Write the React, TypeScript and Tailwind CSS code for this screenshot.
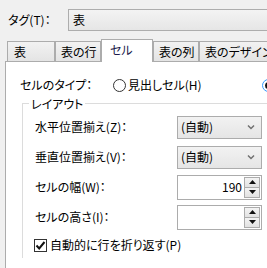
export default function App() {
    return <div className="w-[267px] h-[268px] overflow-hidden bg-[#f0f0f0] text-[12px] leading-none text-black font-['Noto_Sans_CJK_JP',sans-serif] [font-feature-settings:'palt']">
        <div className="w-[300px]">
            {/* tag row */}
            <div className="flex items-center h-[22px] mt-[9px] pl-[8px]">
                <span className="w-[60px]">タグ(T)：</span>
                <div className="flex-1 h-[22px] flex items-center pl-[4px] border border-[#adadad] bg-gradient-to-b from-[#f3f3f3] to-[#e6e6e6]">
                    表
                </div>
            </div>

            {/* tabs */}
            <div className="flex items-end h-[22px] mt-[8px] pl-[7px]">
                <div className="w-[48px] h-[20px] flex items-center pl-[6px] border border-b-0 border-[#acacac] bg-gradient-to-b from-[#f2f2f2] to-[#e4e4e4]">表</div>
                <div className="w-[46px] h-[20px] flex items-center pl-[5px] border border-b-0 border-[#acacac] bg-gradient-to-b from-[#f2f2f2] to-[#e4e4e4]">表の行</div>
                <div className="relative z-10 w-[52px] h-[23px] -mb-[1px] flex items-center pl-[8px] pb-[2px] border border-b-0 border-[#acacac] bg-white text-[#1a1a4a]">セル</div>
                <div className="w-[46px] h-[20px] flex items-center pl-[5px] border border-b-0 border-[#acacac] bg-gradient-to-b from-[#f2f2f2] to-[#e4e4e4]">表の列</div>
                <div className="w-[90px] h-[20px] flex items-center pl-[5px] border border-b-0 border-[#acacac] bg-gradient-to-b from-[#f2f2f2] to-[#e4e4e4]">表のデザイン</div>
            </div>

            {/* panel */}
            <div className="ml-[5px] h-[220px] bg-white border-t border-l border-[#acacac]">
                <div className="flex items-center h-[20px] mt-[13px] pl-[14px]">
                    <span className="w-[93px]">セルのタイプ：</span>
                    <div className="w-[149px] flex items-center gap-[2px]">
                        <span className="w-[13px] h-[13px] rounded-full border border-[#333] bg-white" />
                        <span>見出しセル(H)</span>
                    </div>
                    <span className="w-[13px] h-[13px] rounded-full border border-[#3399ff] bg-white flex items-center justify-center">
                        <span className="w-[7px] h-[7px] rounded-full bg-[#111]" />
                    </span>
                </div>

                <div className="relative ml-[16px] mt-[8px] border-t border-l border-[#dcdcdc]">
                    <span className="absolute -top-[8px] left-[6px] bg-white px-[2px] leading-[16px]">レイアウト</span>
                    <div className="pt-[8px] pl-[12px]">
                        <div className="flex items-center h-[30px]">
                            <span className="w-[142px]">水平位置揃え(Z)：</span>
                            <Select />
                        </div>
                        <div className="flex items-center h-[30px]">
                            <span className="w-[142px]">垂直位置揃え(V)：</span>
                            <Select />
                        </div>
                        <div className="flex items-center h-[30px]">
                            <span className="w-[142px]">セルの幅(W)：</span>
                            <Spin value="190" />
                        </div>
                        <div className="flex items-center h-[30px]">
                            <span className="w-[142px]">セルの高さ(I)：</span>
                            <Spin value="" />
                        </div>
                        <div className="flex items-center h-[26px] -ml-[1px] gap-[3px]">
                            <span className="w-[13px] h-[13px] border border-[#333] bg-white flex items-center justify-center">
                                <svg width="11" height="11" viewBox="0 0 11 11">
                                    <path d="M1.5 5.5 L4.2 8.5 L9.5 2" fill="none" stroke="#111" strokeWidth="2" />
                                </svg>
                            </span>
                            <span>自動的に行を折り返す(P)</span>
                        </div>
                    </div>
                </div>
            </div>
        </div>
    </div>
}

function Select() {
    return <div className="w-[85px] h-[23px] flex items-center justify-between pl-[3px] pr-[6px] border border-[#acacac] bg-gradient-to-b from-[#f2f2f2] to-[#e5e5e5]">
        <span>(自動)</span>
        <svg width="8" height="6" viewBox="0 0 8 6">
            <path d="M1 1.5 L4 4.5 L7 1.5" fill="none" stroke="#707070" strokeWidth="1.5" />
        </svg>
    </div>
}

function Spin({ value }: { value: string }) {
    return <div className="w-[85px] h-[25px] flex items-stretch border border-[#acacac] bg-white p-[1px]">
        <div className="flex-1 flex items-center justify-end pr-[2px]">{value}</div>
        <div className="w-[16px] flex flex-col">
            <div className="flex-1 flex items-center justify-center border border-[#acacac] bg-gradient-to-b from-[#f4f4f4] to-[#e2e2e2]">
                <svg width="7" height="4" viewBox="0 0 7 4"><path d="M0 4 L3.5 0 L7 4 Z" fill="#111" /></svg>
            </div>
            <div className="flex-1 flex items-center justify-center border border-t-0 border-[#acacac] bg-gradient-to-b from-[#f4f4f4] to-[#e2e2e2]">
                <svg width="7" height="4" viewBox="0 0 7 4"><path d="M0 0 L3.5 4 L7 0 Z" fill="#111" /></svg>
            </div>
        </div>
    </div>
}
